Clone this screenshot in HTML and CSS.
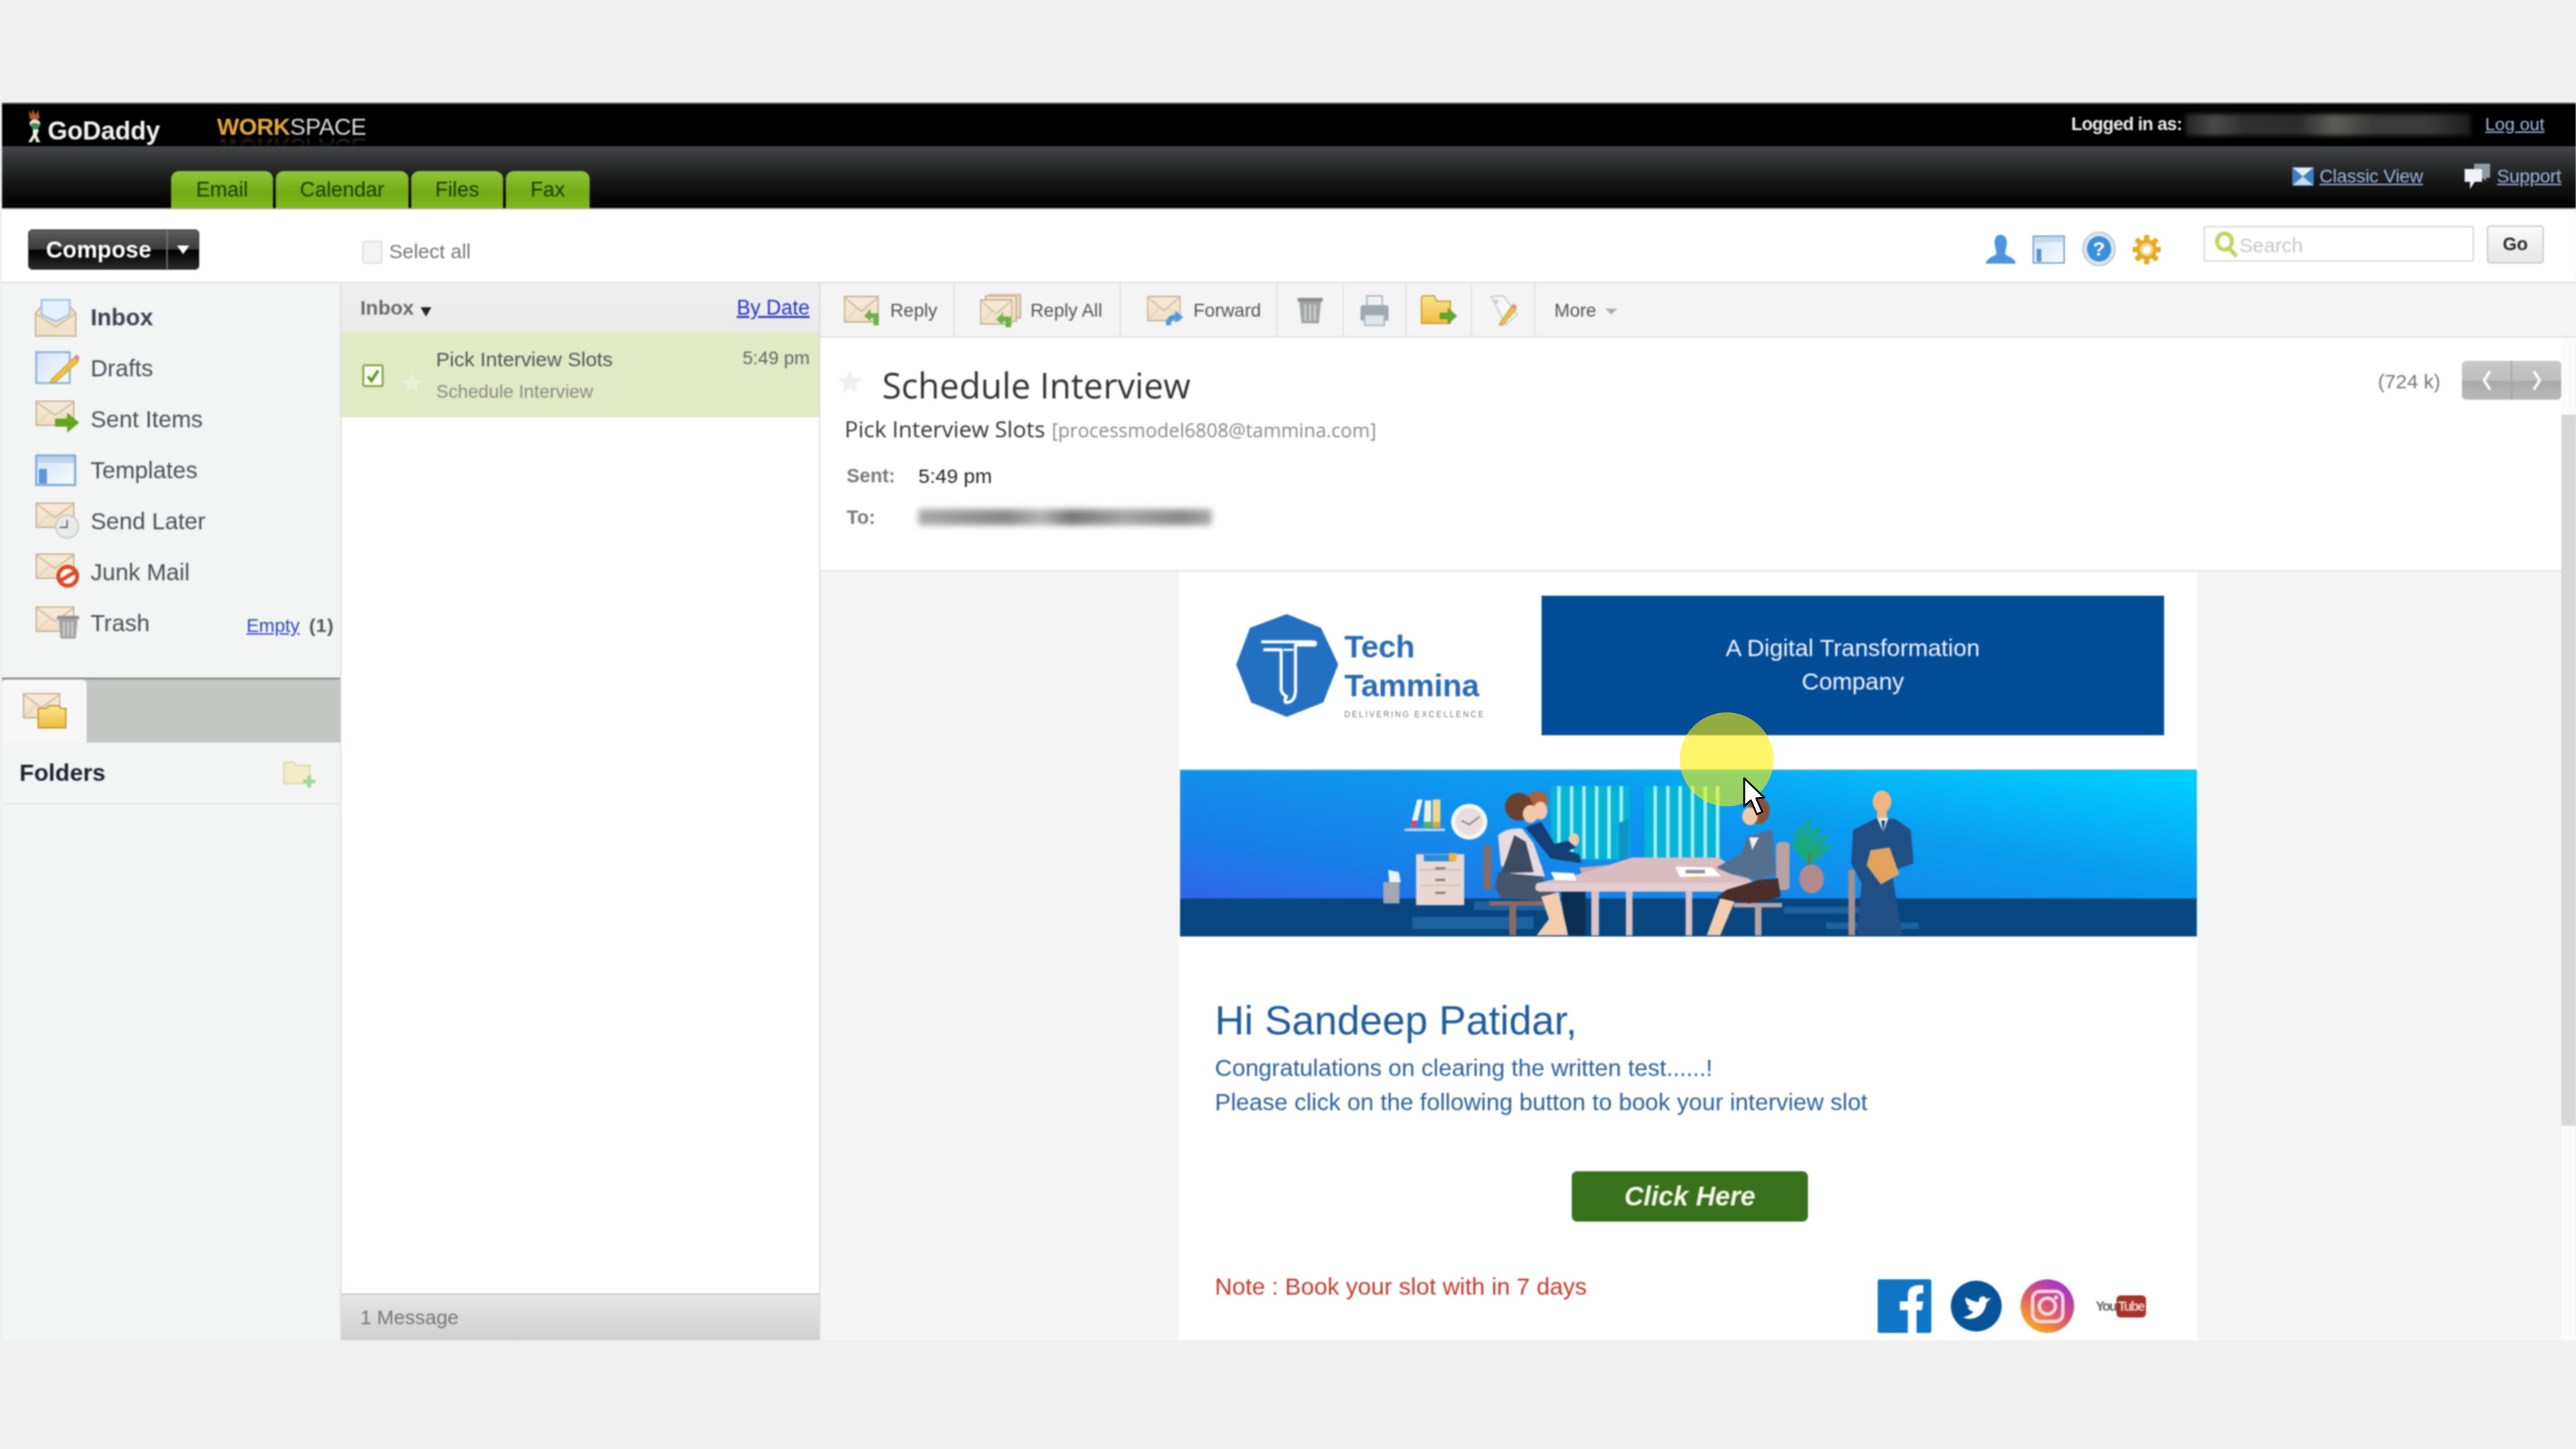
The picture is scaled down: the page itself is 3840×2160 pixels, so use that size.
FILE: index.html
```html
<!DOCTYPE html>
<html lang="en">
<head>
<meta charset="utf-8">
<title>Workspace Email</title>
<link rel="stylesheet" href="styles.css">
</head>
<body>
<svg class="defs" aria-hidden="true">
  <defs>
    <linearGradient id="envg" x1="0" y1="0" x2="0" y2="1"><stop offset="0" stop-color="#f6ead8"/><stop offset="1" stop-color="#efdfc6"/></linearGradient>
    <linearGradient id="blueg" x1="0" y1="0" x2="1" y2="1"><stop offset="0" stop-color="#d3e5f8"/><stop offset="1" stop-color="#f6fafd"/></linearGradient>
    <linearGradient id="folderg" x1="0" y1="0" x2="0" y2="1"><stop offset="0" stop-color="#fbe690"/><stop offset="1" stop-color="#eebc3c"/></linearGradient>
    <linearGradient id="insta" x1="0.2" y1="1" x2="0.85" y2="0.05"><stop offset="0" stop-color="#fdb515"/><stop offset="0.5" stop-color="#d9566f"/><stop offset="1" stop-color="#a02fd8"/></linearGradient>
    <linearGradient id="sky" x1="0" y1="1" x2="1" y2="0"><stop offset="0" stop-color="#3d55e6"/><stop offset="0.3" stop-color="#1a7ee8"/><stop offset="0.65" stop-color="#0a9cf0"/><stop offset="1" stop-color="#00d4ff"/></linearGradient>
    <symbol id="env" viewBox="0 0 58 38" preserveAspectRatio="none">
      <rect x="1" y="1" width="56" height="36" fill="url(#envg)" stroke="#c5af90" stroke-width="2"/>
      <path d="M2 3 L29 22 L56 3" fill="none" stroke="#cdb89a" stroke-width="2"/>
      <path d="M2 36 L22 17 M56 36 L36 17" fill="none" stroke="#e2d2ba" stroke-width="2"/>
    </symbol>
    <symbol id="bin" viewBox="0 0 40 40" preserveAspectRatio="none">
      <rect x="1" y="1" width="38" height="6" rx="2" fill="#8e9090"/>
      <path d="M4 7 H36 L33 39 H7 Z" fill="#a3a5a4"/>
      <path d="M13 11 V35 M20 11 V35 M27 11 V35" stroke="#d2d3d2" stroke-width="3"/>
    </symbol>
  </defs>
</svg>

<div class="app">
  <header class="top">
    <svg class="gd-mark" viewBox="0 0 24 50" aria-hidden="true">
      <path d="M3 1 L7 8 L9 0 L13 8 L17 1 L19 13 Q11 20 4 13 Z" fill="#b25a22"/>
      <ellipse cx="12" cy="21" rx="8" ry="6" fill="#e8e3d2"/>
      <path d="M6 22 Q12 18 20 23 L16 31 H9 Z" fill="#3f8f55"/>
      <path d="M9 30 H18 L15 39 L20 49 H14 L12 42 L7 49 H2 L9 38 Z" fill="#f0f0ea"/>
    </svg>
    <span class="gd-word">GoDaddy</span>
    <span class="ws"><b>WORK</b>SPACE</span>
    <span class="login">Logged in as:</span>
    <span class="login-blur"></span>
    <a class="logout">Log out</a>
  </header>

  <nav class="nav">
    <div class="tabs">
      <a class="tab tab-email">Email</a>
      <a class="tab tab-cal">Calendar</a>
      <a class="tab tab-files">Files</a>
      <a class="tab tab-fax">Fax</a>
    </div>
    <div class="nav-links">
      <svg class="ic-classic" viewBox="0 0 32 28" aria-hidden="true">
        <rect width="32" height="28" fill="#3f7fc0"/>
        <path d="M1 1 H31 L16 14 Z" fill="#e4f1fb"/><path d="M1 27 L16 14 L31 27 Z" fill="#bfdcf3"/>
      </svg>
      <a class="nl nl-classic">Classic View</a>
      <svg class="ic-support" viewBox="0 0 42 40" aria-hidden="true">
        <path d="M16 1 H40 V22 H34 V27 L28 22 H16 Z" fill="#8e9aa3"/>
        <path d="M2 9 H28 V28 H17 L10 39 V28 H2 Z" fill="#eef3f7"/>
      </svg>
      <a class="nl">Support</a>
    </div>
  </nav>

  <div class="toolbar">
    <div class="compose"><span class="compose-main">Compose</span><span class="compose-arrow"></span></div>
    <span class="checkbox"></span>
    <span class="select-all">Select all</span>
    <div class="tools">
      <svg class="t-person" viewBox="0 0 45 43" aria-hidden="true">
        <path d="M22 0 C30 0 33 8 31 17 C30 24 28 27 30 30 C36 33 43 35 45 43 H0 C2 35 9 33 15 30 C17 27 15 24 14 17 C12 8 14 0 22 0 Z" fill="#4c93e0"/>
      </svg>
      <svg class="t-layout" viewBox="0 0 48 42" aria-hidden="true">
        <rect x="1" y="1" width="46" height="40" fill="url(#blueg)" stroke="#6e9cc8" stroke-width="2"/>
        <rect x="3" y="3" width="42" height="7" fill="#c2d9ef"/>
        <rect x="6" y="20" width="7" height="19" fill="#5c93c8"/>
      </svg>
      <svg class="t-help" viewBox="0 0 50 52" aria-hidden="true">
        <ellipse cx="25" cy="26" rx="24" ry="25" fill="#dbe6ee" stroke="#b8c6d2" stroke-width="2"/>
        <ellipse cx="25" cy="26" rx="18" ry="19" fill="#3b8ed8"/>
        <text class="help-q" x="25" y="36" text-anchor="middle">?</text>
      </svg>
      <svg class="t-gear" viewBox="0 0 42 44" aria-hidden="true">
        <g fill="#e9a923">
          <circle cx="21" cy="22" r="15"/>
          <rect x="17" y="0" width="8" height="44" rx="2"/>
          <rect x="17" y="0" width="8" height="44" rx="2" transform="rotate(45 21 22)"/>
          <rect x="17" y="0" width="8" height="44" rx="2" transform="rotate(90 21 22)"/>
          <rect x="17" y="0" width="8" height="44" rx="2" transform="rotate(135 21 22)"/>
        </g>
        <circle cx="21" cy="22" r="10" fill="#f6d889"/>
        <circle cx="21" cy="22" r="6" fill="#fff"/>
      </svg>
    </div>
    <div class="search">
      <svg class="search-ic" viewBox="0 0 36 40" aria-hidden="true">
        <ellipse cx="15" cy="16" rx="11" ry="12" fill="none" stroke="#bdd65f" stroke-width="6"/>
        <path d="M22 26 L33 38" stroke="#bdd65f" stroke-width="6"/>
      </svg>
      <span class="search-ph">Search</span>
    </div>
    <div class="go">Go</div>
  </div>

  <div class="main">
    <aside class="side">
      <ul class="mailboxes">
        <li class="mb mb-on">
          <svg class="mb-ic" viewBox="0 0 72 76" aria-hidden="true">
            <path d="M5 32 L18 17 H52 L65 32 V66 H5 Z" fill="url(#envg)" stroke="#c5af90" stroke-width="2"/>
            <path d="M14 12 H56 V34 L35 44 L14 34 Z" fill="#e6f0fb" stroke="#a8c4e2" stroke-width="3"/>
            <path d="M6 33 L35 52 L64 33" fill="none" stroke="#cdb89a" stroke-width="2"/>
          </svg>
          <span>Inbox</span>
        </li>
        <li class="mb">
          <svg class="mb-ic" viewBox="0 0 72 76" aria-hidden="true">
            <rect x="6" y="14" width="50" height="46" fill="url(#blueg)" stroke="#90b5dc" stroke-width="3"/>
            <path d="M29 54 L62 22 L69 28 L36 58 L27 60 Z" fill="#f0c038" stroke="#a88a3a" stroke-width="1"/>
            <path d="M62 22 L66 17 L71 22 L68 28 Z" fill="#e48a84"/>
          </svg>
          <span>Drafts</span>
        </li>
        <li class="mb">
          <svg class="mb-ic" viewBox="0 0 72 76" aria-hidden="true">
            <use href="#env" x="5" y="10" width="58" height="38"/>
            <path d="M34 37 H52 V28 L70 43 L52 58 V49 H34 Z" fill="#64a521"/>
          </svg>
          <span>Sent Items</span>
        </li>
        <li class="mb">
          <svg class="mb-ic" viewBox="0 0 72 76" aria-hidden="true">
            <rect x="6" y="16" width="58" height="44" fill="url(#blueg)" stroke="#79a5d6" stroke-width="3"/>
            <rect x="8" y="18" width="54" height="9" fill="#bcd5ee"/>
            <rect x="10" y="36" width="12" height="22" fill="#5f97d2"/>
          </svg>
          <span>Templates</span>
        </li>
        <li class="mb">
          <svg class="mb-ic" viewBox="0 0 72 76" aria-hidden="true">
            <use href="#env" x="5" y="10" width="58" height="38"/>
            <circle cx="52" cy="46" r="17" fill="#e9eaea" stroke="#c7c9c9" stroke-width="2"/>
            <path d="M52 36 V47 H41" fill="none" stroke="#5e6266" stroke-width="2"/>
          </svg>
          <span>Send Later</span>
        </li>
        <li class="mb">
          <svg class="mb-ic" viewBox="0 0 72 76" aria-hidden="true">
            <use href="#env" x="5" y="10" width="58" height="38"/>
            <circle cx="53" cy="44" r="14" fill="#fff" stroke="#dc4a24" stroke-width="6"/>
            <path d="M43 50 L63 38" stroke="#dc4a24" stroke-width="6"/>
          </svg>
          <span>Junk Mail</span>
        </li>
        <li class="mb">
          <svg class="mb-ic" viewBox="0 0 72 76" aria-hidden="true">
            <use href="#env" x="5" y="13" width="58" height="38"/>
            <use href="#bin" x="36" y="26" width="35" height="36"/>
          </svg>
          <span>Trash</span>
          <a class="empty">Empty</a>
          <span class="count">(1)</span>
        </li>
      </ul>
      <div class="side-tabs">
        <div class="side-tab">
          <svg class="side-tab-ic" viewBox="0 0 66 54" aria-hidden="true">
            <use href="#env" x="1" y="1" width="56" height="38"/>
            <path d="M24 24 H36 L40 20 H54 L58 24 H65 V53 H24 Z" fill="url(#folderg)" stroke="#c2952a" stroke-width="2"/>
          </svg>
        </div>
      </div>
      <div class="folders">
        <span class="folders-t">Folders</span>
        <svg class="folders-add" viewBox="0 0 48 40" aria-hidden="true">
          <path d="M1 6 Q1 2 6 2 H16 L20 7 H40 V34 H1 Z" fill="#f2edc8" stroke="#e0d7a8" stroke-width="2"/>
          <path d="M30 28 H36 V22 H42 V28 H48 V34 H42 V40 H36 V34 H30 Z" fill="#a6d9a0"/>
        </svg>
      </div>
    </aside>

    <section class="list">
      <div class="list-head">
        <span class="lh-inbox">Inbox</span><span class="lh-caret"></span>
        <a class="lh-date">By Date</a>
      </div>
      <div class="row">
        <span class="row-check">
          <svg viewBox="0 0 24 24" aria-hidden="true"><path d="M5 13 L10 19 L19 5" fill="none" stroke="#5f9a2a" stroke-width="4"/></svg>
        </span>
        <svg class="row-star" viewBox="0 0 28 30" aria-hidden="true"><path d="M14 1 L18 11 L28 12 L20 19 L23 29 L14 23 L5 29 L8 19 L0 12 L10 11 Z" fill="#edf1da"/></svg>
        <div class="row-text">
          <div class="row-from">Pick Interview Slots</div>
          <div class="row-sub">Schedule Interview</div>
        </div>
        <span class="row-time">5:49 pm</span>
      </div>
      <div class="list-fill"></div>
      <div class="list-foot">1 Message</div>
    </section>

    <section class="reader">
      <div class="ribbon">
        <div class="rb rb-reply">
          <svg class="rb-ic" viewBox="0 0 58 44" aria-hidden="true">
            <use href="#env" x="0" y="0" width="52" height="40"/>
            <path d="M30 30 L40 20 V26 H52 V44 H44 V33 H40 V38 Z" fill="#6fb04a"/>
          </svg>
          <span>Reply</span>
        </div>
        <div class="rb rb-all">
          <svg class="rb-ic2" viewBox="0 0 62 50" aria-hidden="true">
            <rect x="14" y="0" width="46" height="36" fill="#e9dcc6" stroke="#c5af90" stroke-width="2"/>
            <rect x="8" y="3" width="46" height="38" fill="#efe2cc" stroke="#c5af90" stroke-width="2"/>
            <use href="#env" x="0" y="8" width="48" height="38"/>
            <path d="M24 38 L34 28 V34 H46 V50 H38 V41 H34 V46 Z" fill="#6fb04a"/>
          </svg>
          <span>Reply All</span>
        </div>
        <div class="rb rb-fwd">
          <svg class="rb-ic" viewBox="0 0 58 44" aria-hidden="true">
            <use href="#env" x="0" y="0" width="50" height="38"/>
            <path d="M28 44 C28 32 34 28 42 28 V22 L54 32 L42 40 V35 C38 35 35 38 36 44 Z" fill="#4f9ad8"/>
          </svg>
          <span>Forward</span>
        </div>
        <div class="rb rb-icon rb-del">
          <svg class="rb-bin" viewBox="0 0 40 40" aria-hidden="true"><use href="#bin" x="0" y="0" width="40" height="40"/></svg>
        </div>
        <div class="rb rb-icon rb-print">
          <svg class="rb-sq" viewBox="0 0 42 44" aria-hidden="true">
            <path d="M10 1 H32 V16 H10 Z" fill="#eef2f5" stroke="#aab4bc" stroke-width="2"/>
            <path d="M1 18 Q1 14 6 14 H36 Q41 14 41 18 V36 H1 Z" fill="#9fa9b2"/>
            <rect x="7" y="28" width="28" height="15" fill="#dfe6ea" stroke="#aab4bc" stroke-width="2"/>
          </svg>
        </div>
        <div class="rb rb-icon rb-move">
          <svg class="rb-wide" viewBox="0 0 54 46" aria-hidden="true">
            <path d="M1 5 Q1 1 6 1 H20 L24 9 H44 V42 H1 Z" fill="url(#folderg)" stroke="#c9a033" stroke-width="2"/>
            <path d="M28 26 H40 V18 L54 31 L40 44 V36 H28 Z" fill="#63a530"/>
          </svg>
        </div>
        <div class="rb rb-icon rb-edit">
          <svg class="rb-sq" viewBox="0 0 44 48" aria-hidden="true">
            <path d="M3 2 L22 1 L43 30 L26 46 Z" fill="#f5f6f6" stroke="#c7cdd1" stroke-width="2"/>
            <circle cx="11" cy="10" r="3" fill="#c7cdd1"/>
            <path d="M15 46 L35 17 L42 22 L21 47 Z" fill="#f0c038" stroke="#9a8436" stroke-width="1"/>
            <path d="M34 18 L37 13 L43 17 L41 23 Z" fill="#e48a84"/>
          </svg>
        </div>
        <div class="rb rb-more"><span>More</span><span class="more-caret"></span></div>
      </div>

      <div class="reader-body">
        <div class="reader-col">
          <div class="mail-head">
            <div class="subject-line">
              <svg class="subject-star" viewBox="0 0 36 36" aria-hidden="true"><path d="M18 0 L23 13 L36 14 L26 23 L29 36 L18 29 L7 36 L10 23 L0 14 L13 13 Z" fill="#f0f1ef"/></svg>
              <h1 class="subject">Schedule Interview</h1>
              <span class="size">(724 k)</span>
              <div class="pager">
                <span class="pg"><svg class="chev" viewBox="0 0 16 32" aria-hidden="true"><path d="M13 2 L4 16 L13 30" fill="none" stroke="#fff" stroke-width="4"/></svg></span>
                <span class="pg"><svg class="chev" viewBox="0 0 16 32" aria-hidden="true"><path d="M3 2 L12 16 L3 30" fill="none" stroke="#fff" stroke-width="4"/></svg></span>
              </div>
            </div>
            <div class="sender"><span class="sender-name">Pick Interview Slots</span> <span class="sender-addr">[processmodel6808@tammina.com]</span></div>
            <div class="meta meta-sent"><span class="meta-k">Sent:</span><span class="meta-v">5:49 pm</span></div>
            <div class="meta meta-to"><span class="meta-k">To:</span><span class="to-blur"></span></div>
          </div>

          <div class="mail-wrap">
            <article class="mail">
              <div class="brand">
                <div class="logo">
                  <svg class="logo-mark" viewBox="120 95 466 468" aria-hidden="true">
                    <path d="M350 105 L500 165 L575 325 L510 490 L350 553 L195 490 L130 325 L190 165 Z" fill="#2470c0" stroke="#2470c0" stroke-width="16" stroke-linejoin="round"/>
                    <path d="M235 222 H465 Q488 222 478 236 H390 V440 Q390 495 348 497 Q335 490 350 470 Q332 462 325 440 V258 H245" fill="none" stroke="#fff" stroke-width="14" stroke-linejoin="round"/>
                    <path d="M335 258 H380" stroke="#fff" stroke-width="10"/>
                  </svg>
                  <div class="logo-text">
                    <div class="logo-name">Tech</div>
                    <div class="logo-name">Tammina</div>
                    <div class="logo-tag">DELIVERING EXCELLENCE</div>
                  </div>
                </div>
                <div class="tagline">A Digital Transformation<br>Company</div>
              </div>

              <svg class="banner" viewBox="0 0 1516 249" preserveAspectRatio="none" aria-hidden="true">
                <rect width="1516" height="249" fill="url(#sky)"/>
                <rect width="1516" height="2" fill="#4fb0cf"/>
                <g transform="translate(240,-17) scale(.574,.3333)">
                  <rect x="-418" y="628" width="2640" height="175" fill="#08467f"/>
                  <rect x="345" y="640" width="235" height="40" fill="#1b629e"/>
                  <rect x="185" y="710" width="315" height="55" fill="#1b629e"/>
                  <rect x="1150" y="665" width="250" height="30" fill="#1b629e"/>
                  <rect x="1260" y="735" width="240" height="30" fill="#1b629e"/>
                  <rect x="545" y="125" width="205" height="330" fill="#05b4d6"/>
                  <rect x="788" y="125" width="197" height="330" fill="#05b4d6"/>
                  <path d="M566 125 V450 M599 125 V450 M631 125 V450 M664 125 V450 M696 125 V450 M728 125 V450 M816 125 V450 M849 125 V450 M881 125 V450 M913 125 V450 M946 125 V450 M978 125 V450" stroke="#a8eef4" stroke-width="9"/>

                  <rect x="165" y="315" width="105" height="12" fill="#b7d6ec"/>
                  <path d="M198 185 H212 L195 310 H180 Z" fill="#f4f2f4"/><path d="M184 280 H199 L195 310 H180 Z" fill="#e0406c"/>
                  <path d="M218 190 H234 V310 H214 Z" fill="#f0eede"/><rect x="214" y="285" width="20" height="25" fill="#54b26a"/>
                  <rect x="238" y="185" width="20" height="125" fill="#f0d98e"/><rect x="238" y="285" width="20" height="25" fill="#e0a83c"/>

                  <ellipse cx="333" cy="285" rx="47" ry="80" fill="#f4f8fb"/>
                  <ellipse cx="333" cy="285" rx="36" ry="62" fill="#e8dede"/>
                  <path d="M313 280 L333 297 L360 262" fill="none" stroke="#8a7a84" stroke-width="5"/>

                  <rect x="195" y="430" width="125" height="228" fill="#e8d8d4"/>
                  <rect x="215" y="432" width="80" height="30" fill="#2e8bd8"/>
                  <rect x="280" y="425" width="20" height="35" fill="#f0b23c"/>
                  <path d="M205 500 H310 M205 570 H310" stroke="#c9b3ad" stroke-width="5"/>
                  <rect x="245" y="488" width="26" height="10" fill="#927a76"/><rect x="245" y="540" width="26" height="10" fill="#927a76"/><rect x="245" y="598" width="26" height="10" fill="#927a76"/>

                  <path d="M123 500 L150 510 L155 556 H125 Z" fill="#f0f4f8"/>
                  <rect x="110" y="555" width="42" height="95" fill="#a3a7b2"/>

                  <rect x="370" y="390" width="20" height="200" rx="10" fill="#8b6a62"/>
                  <rect x="385" y="640" width="140" height="20" fill="#8b6a62"/>
                  <rect x="437" y="658" width="18" height="135" fill="#8b6a62"/>

                  <path d="M570 590 H635 V793 H585 Z" fill="#0a2f52"/>
                  <ellipse cx="510" cy="190" rx="28" ry="42" fill="#a9633e"/>
                  <ellipse cx="518" cy="235" rx="18" ry="40" fill="#f2c9a8"/>
                  <path d="M478 310 L520 285 L560 400 L618 430 L625 470 L545 450 Z" fill="#143f76"/>
                  <ellipse cx="605" cy="365" rx="14" ry="30" fill="#f2c9a8"/>
                  <path d="M540 390 L590 370 L610 400 L560 440 Z" fill="#143f76"/>

                  <ellipse cx="462" cy="218" rx="36" ry="62" fill="#6a3f2e"/>
                  <ellipse cx="492" cy="250" rx="20" ry="40" fill="#f2c9a8"/>
                  <path d="M408 345 Q430 310 470 315 L500 380 L530 530 L445 520 L415 480 Z" fill="#e8dade"/>
                  <path d="M450 345 L480 375 L500 510 L415 515 L430 450 Z" fill="#3d4b60"/>
                  <path d="M408 510 L520 530 L555 600 L520 640 L415 625 L400 580 Z" fill="#46566a"/>
                  <path d="M520 620 L565 600 L590 793 H508 L540 720 Z" fill="#f4cdae"/>

                  <path d="M722 290 L747 270 V480 L722 492 Z" fill="#0e92c7"/>
                  <path d="M620 490 L745 470 L740 510 L625 520 Z" fill="#c9aaac"/>

                  <path d="M620 518 L757 445 H982 L1075 560 H505 Z" fill="#d9bdc0"/>
                  <rect x="505" y="558" width="575" height="40" rx="14" fill="#e4ccd0"/>
                  <rect x="650" y="596" width="20" height="198" fill="#dcc3c6"/>
                  <rect x="740" y="596" width="17" height="198" fill="#dcc3c6"/>
                  <rect x="895" y="596" width="17" height="198" fill="#dcc3c6"/>
                  <path d="M545 510 L605 515 L612 548 L555 545 Z" fill="#fff"/>
                  <path d="M868 485 L965 490 L987 528 L880 532 Z" fill="#fff"/>
                  <rect x="895" y="500" width="50" height="16" fill="#8f8f98"/>
                  <rect x="905" y="533" width="30" height="6" fill="#ecb24c"/>

                  <rect x="1130" y="375" width="35" height="215" rx="14" fill="#b9a2a4"/>
                  <rect x="1020" y="648" width="125" height="20" fill="#b9a2a4"/>
                  <rect x="1075" y="666" width="17" height="128" fill="#b9a2a4"/>
                  <ellipse cx="1085" cy="235" rx="28" ry="60" fill="#8c5038"/>
                  <ellipse cx="1062" cy="260" rx="20" ry="40" fill="#f2c9a8"/>
                  <path d="M1055 350 L1120 320 L1130 520 L1085 548 L1015 520 L975 490 L1040 425 Z" fill="#55708f"/>
                  <path d="M1060 355 L1085 355 L1068 410 Z" fill="#f4f2f2"/>
                  <path d="M1000 590 L1085 545 L1135 538 L1142 620 L1060 650 L975 625 Z" fill="#4a2d28"/>
                  <path d="M985 628 L1022 642 L985 793 H950 Z" fill="#f4cdae"/>

                  <path d="M1217 470 L1178 335 M1217 470 L1192 305 M1217 470 L1212 275 M1217 470 L1238 310 M1217 470 L1258 345 M1217 470 L1272 385 M1217 470 L1172 380" stroke="#19a878" stroke-width="13"/>
                  <rect x="1213" y="420" width="7" height="60" fill="#5c7a5a"/>
                  <ellipse cx="1222" cy="540" rx="32" ry="65" fill="#b2898d"/>

                  <rect x="1318" y="500" width="17" height="293" fill="#a88f8d"/>
                  <ellipse cx="1405" cy="195" rx="24" ry="50" fill="#f0b682"/>
                  <rect x="1392" y="240" width="26" height="35" fill="#f0b682"/>
                  <path d="M1330 320 L1392 268 L1440 272 L1480 322 L1487 472 L1430 505 L1458 793 H1340 L1352 560 L1325 470 Z" fill="#204f86"/>
                  <path d="M1392 268 H1422 L1408 330 Z" fill="#e8eef4"/><path d="M1403 280 H1413 L1408 330 Z" fill="#123a66"/>
                  <path d="M1375 412 L1425 400 L1450 520 L1402 565 L1365 480 Z" fill="#e2a260"/>
                </g>
              </svg>

              <div class="msg">
                <h2 class="hi">Hi Sandeep Patidar,</h2>
                <p class="body-l">Congratulations on clearing the written test......!</p>
                <p class="body-l">Please click on the following button to book your interview slot</p>
                <div class="cta-wrap"><a class="cta">Click Here</a></div>
                <div class="foot-row">
                  <p class="note">Note : Book your slot with in 7 days</p>
                  <div class="social">
                    <svg class="s-fb" viewBox="0 0 80 80" aria-hidden="true">
                      <rect width="80" height="80" rx="3" fill="#0f76c6"/>
                      <path d="M45 80 V46 H33 V33 H45 V24 C45 12 53 8 68 9 V21 C60 21 58 22 58 27 V33 H68 L66 46 H58 V80 Z" fill="#fff"/>
                    </svg>
                    <svg class="s-tw" viewBox="0 0 78 78" aria-hidden="true">
                      <circle cx="39" cy="39" r="38" fill="#05549a"/>
                      <path d="M19 56 C34 62 52 54 54 34 L61 27 L54 28 C51 22 42 24 43 33 C35 33 28 28 23 26 C22 34 26 38 30 40 L26 40 C28 45 32 47 35 47 C31 52 25 54 19 56 Z" fill="#fff"/>
                    </svg>
                    <svg class="s-ig" viewBox="0 0 80 80" aria-hidden="true">
                      <circle cx="40" cy="40" r="40" fill="url(#insta)"/>
                      <rect x="18" y="18" width="45" height="45" rx="11" fill="none" stroke="#fbd7e6" stroke-width="5"/>
                      <circle cx="40" cy="40" r="12" fill="none" stroke="#fbd7e6" stroke-width="5"/>
                      <circle cx="53" cy="27" r="3" fill="#fbd7e6"/>
                    </svg>
                    <span class="s-yt"><span class="yt-you">You</span><span class="yt-tube">Tube</span></span>
                  </div>
                </div>
              </div>
            </article>
          </div>
        </div>
        <div class="scroll"><div class="thumb"></div></div>
      </div>
    </section>
  </div>
</div>

<div class="pointer">
  <span class="halo"></span>
  <svg class="arrow" viewBox="0 0 34 58" aria-hidden="true">
    <path d="M2 2 L2 44 L12 35 L21 56 L29 52 L20 32 L32 31 Z" fill="#fff" stroke="#111" stroke-width="3" stroke-linejoin="round"/>
  </svg>
</div>
</body>
</html>
```
FILE: styles.css
```css
* { box-sizing: border-box; }
html, body { margin: 0; padding: 0; }
body {
  width: 3840px;
  height: 2160px;
  background: #eff0ef;
  overflow: hidden;
  position: relative;
  padding-top: 153px;
  font-family: "Liberation Sans", Arial, sans-serif;
}
.defs { position: absolute; width: 0; height: 0; }
a { cursor: pointer; }
h1, h2, p, ul { margin: 0; padding: 0; }
ul { list-style: none; }

.app {
  margin-left: 3px;
  width: 3837px;
  height: 1845px;
  display: flex;
  flex-direction: column;
  filter: blur(.9px);
  background: #fff;
}

/* top bar */
.top {
  height: 65px;
  flex: none;
  background: #000;
  border-top: 2px solid #666;
  display: flex;
  align-items: center;
  color: #fff;
}
.gd-mark { width: 24px; height: 50px; margin-left: 37px; margin-top: 2px; }
.gd-word { font-size: 38px; font-weight: 700; letter-spacing: -.2px; margin-left: 7px; margin-top: 17px; color: #f2f2f2; }
.ws {
  font-size: 35px;
  margin-left: 85px;
  margin-top: 4px;
  color: #d8d8d8;
  letter-spacing: -.5px;
  -webkit-box-reflect: below -10px linear-gradient(transparent 50%, rgba(255,255,255,.35));
}
.ws b { color: #e3a93b; font-weight: 700; }
.login { font-size: 27px; font-weight: 700; letter-spacing: -.8px; margin-left: auto; color: #eee; margin-top: -3px; }
.login-blur {
  width: 425px; height: 32px; margin-left: 5px; margin-top: -2px;
  background: linear-gradient(90deg, #242424, #4a4a4a 10%, #303030 20%, #2c2c2c 40%, #5d5d58 52%, #3a3a3a 66%, #3a3a3a 85%, #1d1d1d);
  filter: blur(3px);
}
.logout { font-size: 26.5px; color: #a4bde3; text-decoration: underline; margin-left: 22px; margin-right: 47px; margin-top: -3px; }

/* nav */
.nav {
  height: 94px;
  flex: none;
  background: linear-gradient(180deg, #444648 0, #2f3031 25%, #141414 62%, #000 100%);
  border-bottom: 2px solid #aaa;
  display: flex;
  justify-content: space-between;
}
.tabs { display: flex; align-items: flex-end; margin-left: 252px; gap: 4px; }
.tab {
  height: 55px;
  border-radius: 12px 12px 0 0;
  background: linear-gradient(180deg, #90c73a 0, #79b11e 45%, #73ac14 60%, #80bb1c 100%);
  color: #1c3a0a;
  font-size: 31px;
  display: flex; align-items: center; justify-content: center;
}
.tab-email { width: 152px; }
.tab-cal { width: 198px; }
.tab-files { width: 137px; }
.tab-fax { width: 125px; }
.nav-links { display: flex; align-items: center; padding-right: 22px; padding-bottom: 2px; }
.nl { font-size: 28px; color: #9fb7de; text-decoration: underline; letter-spacing: -.3px; }
.ic-classic { width: 32px; height: 28px; margin-right: 8px; }
.ic-support { width: 42px; height: 40px; margin-left: 60px; margin-right: 8px; }

/* toolbar */
.toolbar {
  height: 110px;
  flex: none;
  display: flex;
  align-items: flex-start;
  background: #fff;
  padding-left: 39px;
  border-bottom: 2px solid #dfe0df;
}
.compose {
  width: 255px; height: 60px; margin-top: 30px;
  border-radius: 6px;
  background: linear-gradient(180deg, #5d5d5d 0, #3c3c3c 48%, #000 52%, #2a2a2a 100%);
  border: 1px solid #222;
  display: flex;
}
.compose-main {
  width: 207px; border-right: 2px solid #777;
  color: #fff; font-size: 34.5px; font-weight: 700;
  display: flex; align-items: center; justify-content: center;
  padding-left: 3px;
}
.compose-arrow { flex: 1; position: relative; display: flex; align-items: center; justify-content: center; }
.compose-arrow::before {
  content: ""; border-left: 9px solid transparent; border-right: 9px solid transparent; border-top: 13px solid #fff;
}
.checkbox {
  width: 30px; height: 34px; margin-left: 243px; margin-top: 47px;
  background: #f4f4f4; border: 2px solid #ddd; border-radius: 4px;
}
.select-all { font-size: 30px; color: #777; margin-left: 10px; margin-top: 46px; }
.tools { display: flex; align-items: flex-start; margin-left: auto; margin-top: 33px; }
.tools svg { display: block; }
.t-person { width: 45px; height: 43px; margin-top: 5px; }
.t-layout { width: 48px; height: 42px; margin-left: 25px; margin-top: 6px; }
.t-help { width: 50px; height: 52px; margin-left: 26px; }
.t-gear { width: 42px; height: 44px; margin-left: 25px; margin-top: 5px; }
.help-q { font-size: 30px; font-weight: 700; fill: #fff; }
.search {
  width: 403px; height: 53px; margin-left: 64px; margin-top: 25px;
  border: 2px solid #d6d8d6; background: #fff;
  display: flex; align-items: center; padding-left: 14px;
}
.search-ic { width: 36px; height: 40px; flex: none; }
.search-ph { font-size: 30px; color: #c5c7c7; margin-left: 1px; margin-top: 4px; }
.go {
  width: 85px; height: 57px; margin-left: 19px; margin-right: 48px; margin-top: 24px;
  border: 2px solid #c9cbc9; border-radius: 5px;
  background: linear-gradient(180deg, #fafafa, #e6e6e6);
  font-size: 27px; font-weight: 700; color: #2a2a2a;
  display: flex; align-items: center; justify-content: center;
}

/* main */
.main { flex: 1; min-height: 0; display: flex; }

.side {
  width: 506px; flex: none;
  background: #f3f5f4;
  border-right: 2px solid #dcdedc;
  display: flex; flex-direction: column;
}
.mailboxes { padding-top: 13px; height: 588px; flex: none; }
.mb {
  height: 76px; display: flex; align-items: center;
  padding-left: 45px;
  font-size: 35px; color: #4b5058;
}
.mb-on { font-weight: 700; color: #3d4450; }
.mb-ic { width: 72px; height: 76px; flex: none; margin-right: 15px; }
.empty { font-size: 28px; color: #3244c8; text-decoration: underline; margin-left: auto; margin-top: 8px; }
.count { font-size: 28px; font-weight: 700; color: #555; margin-left: 14px; margin-right: 9px; margin-top: 8px; letter-spacing: 1px; }
.side-tabs {
  height: 97px; flex: none;
  background: #c5c7c5;
  border-top: 3px solid #8f918f;
}
.side-tab {
  width: 126px; height: 94px; background: #f6f7f6;
  border-radius: 6px 6px 0 0;
  padding: 19px 0 0 30px;
}
.side-tab-ic { width: 66px; height: 54px; display: block; }
.folders {
  height: 92px; flex: none;
  border-bottom: 2px solid #e4e5e4;
  display: flex; align-items: center; justify-content: space-between;
  padding: 0 37px 0 26px;
}
.folders-t { font-size: 35.5px; font-weight: 700; color: #1d2230; }
.folders-add { width: 48px; height: 40px; margin-top: 4px; }

.list {
  width: 714px; flex: none;
  background: #fff;
  border-right: 2px solid #dcdedc;
  display: flex; flex-direction: column;
}
.list-head {
  height: 73px; flex: none;
  background: linear-gradient(180deg, #f0f0f0, #ebebeb);
  display: flex; align-items: center;
  padding: 0 14px 0 28px;
  color: #666;
}
.lh-inbox { font-size: 30px; font-weight: 700; color: #6b6b6b; }
.lh-caret {
  border-left: 8px solid transparent; border-right: 8px solid transparent; border-top: 14px solid #222;
  margin-left: 10px; margin-top: 12px;
}
.lh-date { font-size: 30.6px; color: #2535c4; text-decoration: underline; margin-left: auto; }
.row {
  height: 127px; flex: none;
  background: #e2eac5;
  display: flex; align-items: flex-start;
  padding-left: 31px; padding-right: 14px;
}
.row-check {
  width: 32px; height: 34px; flex: none; margin-top: 48px;
  background: #fafaf2; border: 3px solid #86a94c; border-radius: 4px;
  display: flex;
}
.row-check svg { width: 100%; height: 100%; }
.row-star { width: 28px; height: 30px; flex: none; margin-left: 28px; margin-top: 60px; }
.row-text { margin-left: 22px; padding-top: 22px; }
.row-from { font-size: 30.4px; color: #555; line-height: 36px; }
.row-sub { font-size: 27.7px; color: #8a8a82; line-height: 36px; margin-top: 13px; }
.row-time { font-size: 27.7px; color: #666; margin-left: auto; padding-top: 23px; }
.list-fill { flex: 1; }
.list-foot {
  height: 70px; flex: none;
  background: linear-gradient(180deg, #e6e6e6, #cfcfcf);
  border-top: 2px solid #c8c8c8;
  display: flex; align-items: center; padding-left: 28px;
  font-size: 30px; color: #777;
}

/* reader */
.reader { flex: 1; min-width: 0; display: flex; flex-direction: column; background: #fff; }
.ribbon {
  height: 81px; flex: none;
  background: #f3f4f3;
  border-bottom: 2px solid #e0e1e0;
  display: flex;
  font-size: 27.5px; color: #555;
}
.rb { display: flex; align-items: center; border-right: 2px solid #e2e3e2; padding-top: 3px; }
.rb-reply { width: 200px; padding-left: 35px; }
.rb-all { width: 248px; padding-left: 38px; }
.rb-fwd { width: 233px; padding-left: 39px; }
.rb-ic { width: 58px; height: 44px; margin-right: 11px; }
.rb-ic2 { width: 62px; height: 50px; margin-right: 13px; }
.rb-icon { justify-content: center; }
.rb-del { width: 99px; }
.rb-print { width: 94px; }
.rb-move { width: 97px; }
.rb-edit { width: 95px; }
.rb-bin { width: 40px; height: 40px; }
.rb-sq { width: 44px; height: 46px; }
.rb-wide { width: 54px; height: 46px; }
.rb-more { border-right: 0; padding-left: 28px; }
.more-caret {
  border-left: 9px solid transparent; border-right: 9px solid transparent; border-top: 9px solid #b0b0b0;
  margin-left: 13px; margin-top: 3px;
}

.reader-body { flex: 1; min-height: 0; display: flex; }
.reader-col { flex: 1; min-width: 0; display: flex; flex-direction: column; }
.scroll { width: 22px; flex: none; background: #fbfbfb; }
.thumb { margin-top: 115px; height: 1060px; background: #d6d7d6; }

.mail-head {
  height: 349px; flex: none;
  background: #fff;
  border-bottom: 2px solid #e3e4e3;
  padding: 0 0 0 36px;
}
.subject-line { display: flex; align-items: center; height: 80px; margin-top: 30px; margin-left: -10px; }
.subject-star { width: 36px; height: 36px; flex: none; margin-top: -10px; }
.subject {
  font-family: "Open Sans", "Noto Sans", sans-serif; font-weight: 400;
  font-size: 52.2px; color: #333; margin-left: 30px;
}
.size { font-size: 30px; color: #777; margin-left: auto; margin-right: 32px; margin-top: -9px; }
.pager { display: flex; width: 148px; height: 58px; margin-top: -12px; border-radius: 6px; overflow: hidden; flex: none; }
.pg {
  flex: 1; background: linear-gradient(180deg, #c9c9c9 0, #bdbdbd 50%, #a9a9a9 53%, #bcbcbc 100%);
  display: flex; align-items: center; justify-content: center;
}
.pg + .pg { border-left: 2px solid #a5a5a5; }
.chev { width: 16px; height: 32px; display: block; }
.sender { margin-top: 3px; display: flex; align-items: baseline; gap: 10px; height: 50px; }
.sender-name { font-family: "Open Sans", "Noto Sans", sans-serif; font-size: 33.5px; color: #333; }
.sender-addr { font-family: "Open Sans", "Noto Sans", sans-serif; font-size: 28.7px; color: #8a8a8a; }
.meta { display: flex; align-items: center; height: 40px; padding-left: 3px; }
.meta-sent { margin-top: 23px; }
.meta-to { margin-top: 22px; }
.meta-k { width: 107px; font-size: 29px; font-weight: 700; color: #7a7a7a; flex: none; }
.meta-v { font-size: 30.4px; color: #222; }
.to-blur {
  width: 437px; height: 24px;
  background: linear-gradient(90deg, #aaa, #888 30%, #b5b5b5 42%, #777 52%, #a5a5a5 70%, #8a8a8a 90%, #aaa);
  filter: blur(5px);
}

.mail-wrap { flex: 1; min-height: 0; background: #f4f5f4; padding-left: 534px; overflow: hidden; }
.mail { width: 1519px; height: 100%; background: #fff; display: flex; flex-direction: column; overflow: hidden; }
.brand { height: 295px; flex: none; display: flex; align-items: flex-start; padding-top: 36px; }
.logo { width: 541px; height: 208px; display: flex; padding: 27px 0 0 85px; flex: none; }
.logo-mark { width: 154px; height: 154px; flex: none; }
.logo-text { margin-left: 8px; color: #2a6cb4; padding-top: 20px; }
.logo-name { font-size: 47px; font-weight: 700; line-height: 58px; letter-spacing: -.3px; }
.logo-tag { font-size: 12px; letter-spacing: 2.6px; color: #777; margin-top: 7px; white-space: nowrap; }
.tagline {
  width: 928px; height: 208px; flex: none;
  background: #034c97;
  color: #eef4fb;
  font-size: 35.7px; line-height: 50px; text-align: center;
  padding-top: 53px;
}
.banner { display: block; width: 1516px; height: 249px; margin-left: 2px; flex: none; }

.msg { padding: 0 0 0 54px; flex: 1; }
.hi { font-size: 60.7px; font-weight: 400; color: #1f5c9a; margin-top: 89px; line-height: 72px; }
.body-l { font-size: 35.5px; line-height: 51px; color: #2c5f99; white-space: nowrap; }
.hi + .body-l { margin-top: 10px; }
.cta-wrap { display: flex; padding-left: 532px; margin-top: 77px; }
.cta {
  width: 352px; height: 75px;
  background: #38701c;
  border-radius: 8px;
  color: #f4f8e8;
  font-size: 40px; font-weight: 700; font-style: italic;
  display: flex; align-items: center; justify-content: center;
}
.foot-row { display: flex; align-items: flex-start; margin-top: 72px; }
.note { font-size: 35.5px; color: #c2392a; line-height: 50px; white-space: nowrap; }
.social { display: flex; align-items: center; margin-left: auto; height: 80px; margin-top: 14px; margin-right: 80px; }
.s-fb { width: 80px; height: 80px; }
.s-tw { width: 78px; height: 78px; margin-left: 28px; }
.s-ig { width: 80px; height: 80px; margin-left: 27px; }
.s-yt { display: flex; align-items: center; margin-left: 32px; font-size: 20px; font-weight: 700; letter-spacing: -2px; width: 72px; white-space: nowrap; }
.yt-you { color: #666; }
.yt-tube { background: #a8322a; color: #f1cfc8; border-radius: 6px; padding: 5px 3px 5px 2px; margin-left: 1px; }

/* screen-recording pointer, sits over the page */
.pointer { position: absolute; left: 2504px; top: 1062px; width: 140px; height: 160px; pointer-events: none; }
.halo { position: absolute; left: 0; top: 0; width: 140px; height: 140px; border-radius: 50%; background: rgba(255, 240, 0, .58); }
.arrow { position: absolute; left: 94px; top: 96px; width: 34px; height: 58px; }
```
